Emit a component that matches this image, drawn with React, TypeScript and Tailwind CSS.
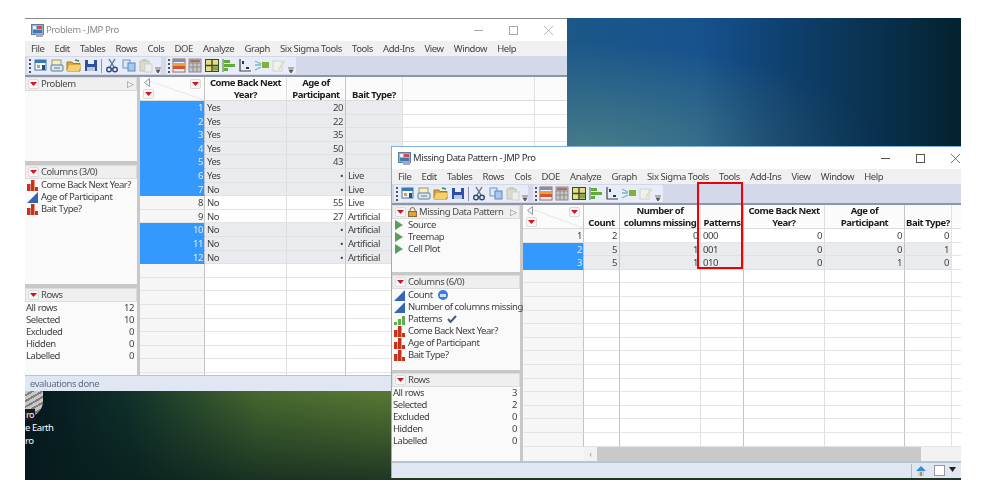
import type { ReactNode } from "react"

type Col = { name?: string[]; w: number; align?: "left" | "right"; line?: string }
type Row = { selected: boolean; cells: string[] }

const menus = ["File", "Edit", "Tables", "Rows", "Cols", "DOE", "Analyze", "Graph", "Six Sigma Tools", "Tools", "Add-Ins", "View", "Window", "Help"]

const problemCols: Col[] = [
  { w: 65, line: "border-[#c4c4c4]" },
  { name: ["Come Back Next", "Year?"], w: 82, align: "left", line: "border-[#dedede]" },
  { name: ["Age of", "Participant"], w: 59, align: "right", line: "border-[#c4c4c4]" },
  { name: ["Bait Type?"], w: 57, align: "left", line: "border-[#e2e2e2]" },
  { w: 132, line: "border-[#e2e2e2]" },
  { w: 32, line: "border-transparent" },
]

const problemRows: Row[] = [
  { selected: true, cells: ["Yes", "20", ""] },
  { selected: true, cells: ["Yes", "22", ""] },
  { selected: true, cells: ["Yes", "35", ""] },
  { selected: true, cells: ["Yes", "50", ""] },
  { selected: true, cells: ["Yes", "43", ""] },
  { selected: true, cells: ["Yes", "•", "Live"] },
  { selected: true, cells: ["No", "•", "Live"] },
  { selected: false, cells: ["No", "55", "Live"] },
  { selected: false, cells: ["No", "27", "Artificial"] },
  { selected: true, cells: ["No", "•", "Artificial"] },
  { selected: true, cells: ["No", "•", "Artificial"] },
  { selected: true, cells: ["No", "•", "Artificial"] },
]

const patternCols: Col[] = [
  { w: 61, line: "border-[#c4c4c4]" },
  { name: ["Count"], w: 36, align: "right", line: "border-[#c4c4c4]" },
  { name: ["Number of", "columns missing"], w: 81, align: "right", line: "border-[#dedede]" },
  { name: ["Patterns"], w: 43, align: "left", line: "border-[#c4c4c4]" },
  { name: ["Come Back Next", "Year?"], w: 81, align: "right", line: "border-[#dedede]" },
  { name: ["Age of", "Participant"], w: 80, align: "right", line: "border-[#c4c4c4]" },
  { name: ["Bait Type?"], w: 47, align: "right", line: "border-[#e2e2e2]" },
  { w: 10, line: "border-transparent" },
]

const patternRows: Row[] = [
  { selected: false, cells: ["2", "0", "000", "0", "0", "0"] },
  { selected: true, cells: ["5", "1", "001", "0", "0", "1"] },
  { selected: true, cells: ["5", "1", "010", "0", "1", "0"] },
]

function Caret() {
  return (
    <span className="flex h-[10px] w-[11px] shrink-0 items-center justify-center rounded-[2px] border border-[#dcdcdc] bg-[#f7f7f7]">
      <svg width="7" height="4" viewBox="0 0 7 4">
        <path d="M0 0h7L3.500 4z" fill="#d8121c" />
      </svg>
    </span>
  )
}

function BarsIcon() {
  return (
    <svg width="11" height="11" viewBox="0 0 11 11" className="shrink-0">
      <path d="M0 4h3.500v7H0zM4 0h3.500v11H4zM8 7h3v4H8z" fill="#c8321a" />
    </svg>
  )
}

function RampIcon() {
  return (
    <svg width="11" height="11" viewBox="0 0 11 11" className="shrink-0">
      <path d="M0 11L11 0v11z" fill="#3566b4" />
    </svg>
  )
}

function StepsIcon() {
  return (
    <svg width="11" height="11" viewBox="0 0 11 11" className="shrink-0">
      <path d="M0 8h3v3H0zM4 5h3v6H4zM8 2h3v9H8z" fill="#5cae4e" />
    </svg>
  )
}

function PlayIcon() {
  return (
    <svg width="9" height="10" viewBox="0 0 9 10" className="shrink-0">
      <path d="M1 0l8 5-8 5z" fill="#58a05a" />
    </svg>
  )
}

function WindowIcon() {
  return (
    <svg width="13" height="13" viewBox="0 0 13 13" className="shrink-0">
      <rect x="0.5" y="0.5" width="12" height="10" fill="#8fb4d8" stroke="#5d7f9f" />
      <rect x="2" y="2" width="3" height="3" fill="#e8f0f8" />
      <rect x="6" y="2" width="5" height="3" fill="#d34f45" />
      <rect x="2" y="6" width="9" height="3" fill="#3d78b8" />
      <rect x="5" y="10" width="7" height="3" fill="#a7a7b8" />
    </svg>
  )
}

function Tool({ children }: { children: ReactNode }) {
  return (
    <svg width="16" height="15" viewBox="0 0 16 15" className="shrink-0">
      {children}
    </svg>
  )
}

function Overflow() {
  return (
    <svg width="6" height="7" viewBox="0 0 6 7" className="shrink-0 self-end">
      <path d="M0 1h6M1 3h4l-2 3z" stroke="#555" strokeWidth="0.8" fill="#555" />
    </svg>
  )
}

function Grip() {
  return <span className="h-[14px] w-[2px] shrink-0 border-l-2 border-dotted border-[#555]" />
}

function Toolbar() {
  return (
    <div className="flex h-[21px] items-center gap-[5px] border-b-2 border-[#8e95a6] bg-[#d3d9ea] pl-[2px]">
      <div className="flex h-[17px] w-[134px] items-center gap-[1px] rounded-[2px] bg-[#e8ecf6] px-[2px]">
        <Grip />
        <Tool>
          <rect x="3" y="2" width="11" height="10" fill="#f6f8fb" stroke="#3a78b5" />
          <path d="M3 2h11v3H3z" fill="#3a78b5" />
          <path d="M5 7h3v3H5z" fill="#e79c2d" />
          <path d="M10 7h3v5h-3z" fill="#274f7d" />
        </Tool>
        <Tool>
          <rect x="3" y="2" width="9" height="7" fill="#f6efc4" stroke="#9a9a70" />
          <rect x="2" y="7" width="12" height="6" rx="1" fill="#dfe7ee" stroke="#557f99" />
          <path d="M5 10h6" stroke="#557f99" />
        </Tool>
        <Tool>
          <path d="M1 4h5l1 1.500h7V13H1z" fill="#d9a63e" stroke="#a87a22" />
          <path d="M3 7h12l-2 6H1z" fill="#f5d070" />
          <path d="M9 2l4 1" stroke="#3f8a3f" strokeWidth="1.500" />
        </Tool>
        <Tool>
          <rect x="2" y="2" width="12" height="11" fill="#2f4fa2" />
          <rect x="5" y="2" width="6" height="4" fill="#e7ecf7" />
          <rect x="4" y="9" width="8" height="4" fill="#b9c4dd" />
        </Tool>
        <span className="mx-[1px] h-[14px] w-px shrink-0 bg-[#8f97a8]" />
        <Tool>
          <path d="M5 1l5 8M11 1L6 9" stroke="#5b7390" strokeWidth="1.400" />
          <circle cx="5" cy="11.500" r="2.300" fill="none" stroke="#2c4a76" strokeWidth="1.400" />
          <circle cx="11" cy="11.500" r="2.300" fill="none" stroke="#2c4a76" strokeWidth="1.400" />
        </Tool>
        <Tool>
          <rect x="2" y="2" width="7" height="8" fill="#dce8f7" stroke="#6d93c6" />
          <rect x="7" y="5" width="7" height="8" fill="#a9c6ec" stroke="#5b86c0" />
        </Tool>
        <Tool>
          <rect x="2" y="3" width="9" height="10" fill="#dddad0" stroke="#c4c0b2" />
          <rect x="7" y="6" width="7" height="8" fill="#eeeeee" stroke="#cfcfcf" />
          <rect x="4" y="1" width="5" height="3" fill="#cfcabb" />
        </Tool>
        <Overflow />
      </div>
      <div className="flex h-[17px] w-[130px] items-center gap-[0.700px] rounded-[2px] bg-[#e8ecf6] px-[2px]">
        <Grip />
        <Tool>
          <rect x="2" y="1" width="12" height="13" fill="#f4f2ee" stroke="#9a6a5a" />
          <rect x="2" y="5" width="12" height="3" fill="#e8a52c" />
          <rect x="2" y="8" width="12" height="3" fill="#d9503f" />
          <rect x="2" y="1" width="12" height="3" fill="#6f93c9" />
        </Tool>
        <Tool>
          <rect x="2" y="1" width="12" height="13" fill="#c9c6c6" stroke="#8f8a8a" />
          <path d="M2 5h12M6 1v13M10 1v13M2 9h12" stroke="#8f8a8a" />
          <rect x="3" y="2" width="10" height="2" fill="#b36c62" />
        </Tool>
        <Tool>
          <rect x="1.500" y="1.500" width="13" height="12" fill="#e4dc86" stroke="#3a4a22" />
          <path d="M1.500 7.500h13M8 1.500v12" stroke="#3a4a22" strokeWidth="1.400" />
          <rect x="9" y="8.500" width="5" height="4" fill="#7ea84a" />
        </Tool>
        <Tool>
          <path d="M2 1v13" stroke="#3e7d3a" />
          <path d="M3 2h6v3H3zM3 6h11v3H3zM3 10h4v3H3z" fill="#63a93c" />
        </Tool>
        <Tool>
          <path d="M3 1v12h11" fill="none" stroke="#444" strokeWidth="1.200" />
          <path d="M5 3h2v3H5zM9 9h3v2H9z" fill="#26364f" />
        </Tool>
        <Tool>
          <path d="M1 3l6 3M1 7h6M1 12l6-3" stroke="#7ab6c9" strokeWidth="1.300" />
          <rect x="8" y="4" width="7" height="6" fill="#7cb436" />
        </Tool>
        <Tool>
          <rect x="2" y="3" width="9" height="10" fill="#f0f0ec" stroke="#d2d2cc" />
          <path d="M7 11l6-9 1.500 1-6 9z" fill="#dcdcc8" />
        </Tool>
        <Overflow />
      </div>
    </div>
  )
}

function PanelHead({ children }: { children: ReactNode }) {
  return (
    <div className="flex h-[14px] shrink-0 items-center gap-[2px] border border-[#dcdcdc] bg-[#efefef] px-[2px] whitespace-nowrap text-[#4a4a4a]">
      {children}
    </div>
  )
}

function ListItem({ icon, label, extra }: { icon: ReactNode; label: string; extra?: ReactNode }) {
  return (
    <div className="flex h-[12px] items-center gap-[3px] pl-[2px] whitespace-nowrap text-[#3f3f3f]">
      {icon}
      <span>{label}</span>
      {extra}
    </div>
  )
}

function RowStats({ values }: { values: number[] }) {
  const labels = ["All rows", "Selected", "Excluded", "Hidden", "Labelled"]
  return (
    <div className="pr-[3px] pl-[1px] text-[#3f3f3f]">
      {labels.map((label, i) => (
        <div key={label} className="flex h-[12px] items-center justify-between">
          <span>{label}</span>
          <span>{values[i]}</span>
        </div>
      ))}
    </div>
  )
}

function DataGrid({ cols, rows, total }: { cols: Col[]; rows: Row[]; total: number }) {
  const empty = Array.from({ length: total - rows.length })
  return (
    <div className="min-w-0 flex-1 overflow-hidden bg-white">
      <div className="flex h-[24px]">
        {cols.map((col, i) => (
          <div
            key={i}
            style={{ width: col.w }}
            className={`relative flex shrink-0 flex-col justify-end border-r border-b ${col.line} border-b-[#dcdcdc] bg-[#fbfbfb] text-center leading-[11.500px] font-bold text-[#1c1c1c]`}
          >
            {i === 0 && (
              <>
                <svg className="absolute inset-0 h-full w-full" viewBox="0 0 60 24" preserveAspectRatio="none">
                  <path d="M8 4L60 24" stroke="#e2e2e2" strokeWidth="0.8" />
                </svg>
                <svg width="6" height="9" viewBox="0 0 6 9" className="absolute top-[1px] left-[4px]">
                  <path d="M5.500 0.500v8L0.500 4.500z" fill="#f4f4f4" stroke="#999" />
                </svg>
                <span className="absolute top-[2px] right-[3px]">
                  <Caret />
                </span>
                <span className="absolute bottom-[1px] left-[3px]">
                  <Caret />
                </span>
              </>
            )}
            {col.name?.map(line => (
              <div key={line} className="whitespace-nowrap">
                {line}
              </div>
            ))}
          </div>
        ))}
      </div>
      {rows.map((row, r) => (
        <div key={r} className="flex h-[13.6px] leading-[13px]">
          <div
            style={{ width: cols[0].w }}
            className={`shrink-0 border-r border-b pr-[1px] text-right ${cols[0].line} ${row.selected ? "border-b-[#3399ff] bg-[#3399ff] text-[#dcecff]" : "border-b-[#e4e4e4] bg-[#f6f6f6] text-[#404040]"}`}
          >
            {r + 1}
          </div>
          {cols.slice(1).map((col, c) => (
            <div
              key={c}
              style={{ width: col.w }}
              className={`shrink-0 border-r border-b px-[2px] text-[#404040] ${col.line} ${col.align === "right" ? "text-right" : "text-left"} ${row.selected && c < row.cells.length ? "border-b-[#dfe1e4] bg-[#e9ebee]" : "border-b-[#e4e4e4] bg-white"}`}
            >
              {row.cells[c]}
            </div>
          ))}
        </div>
      ))}
      {empty.map((_, r) => (
        <div key={r} className="flex h-[13.6px]">
          {cols.map((col, c) => (
            <div
              key={c}
              style={{ width: col.w }}
              className={`shrink-0 border-r border-b border-b-[#e4e4e4] ${col.line} ${c === 0 ? "bg-[#f6f6f6]" : "bg-white"}`}
            />
          ))}
        </div>
      ))}
    </div>
  )
}

function Titlebar({ title, active }: { title: string; active: boolean }) {
  return (
    <div className={`flex h-[22px] items-center bg-white pl-[6px] ${active ? "pr-[1px]" : "pr-[14px]"}`}>
      <WindowIcon />
      <span className={`ml-[2px] text-[9.500px] tracking-[-0.45px] ${active ? "text-[#333]" : "text-[#8a8a8a]"}`}>{title}</span>
      <div className={`ml-auto flex items-center gap-[26px] ${active ? "text-[#555]" : "text-[#a8a8a8]"}`}>
        <span className="h-px w-[9px] bg-current" />
        <span className="h-[9px] w-[9px] border border-current" />
        <svg width="9" height="9" viewBox="0 0 9 9">
          <path d="M0 0l9 9M9 0L0 9" stroke="currentColor" strokeWidth="0.8" />
        </svg>
      </div>
    </div>
  )
}

function Menubar() {
  return (
    <div className="flex h-[15px] items-center gap-[10.200px] bg-[#f0f0f0] pl-[6px] text-[#444]">
      {menus.map(m => (
        <span key={m} className="whitespace-nowrap">
          {m}
        </span>
      ))}
    </div>
  )
}

export default function App() {
  return (
    <div className="relative h-[498px] w-[987px] overflow-hidden bg-white font-['Noto_Sans',sans-serif] text-[9.500px] leading-[12px] tracking-[-0.45px]">
      <div className="absolute top-[18px] left-[25px] h-[462px] w-[936px] overflow-hidden">
        <div className="h-[231px] bg-[linear-gradient(90deg,transparent_72%,#03222f_100%),radial-gradient(ellipse_300px_110px_at_560px_135px,#487d88,transparent),linear-gradient(90deg,#1f5a86_50%,#15508f_78%)]" />
        <div className="h-[231px] bg-[linear-gradient(180deg,transparent_62%,rgba(6,28,28,0.7)_100%),linear-gradient(90deg,#04161e_0%,#10302a_11%,#466830_25%,#577833_38%,#4e7031_100%)]" />

        {/* desktop icon peeking out under the first window */}
        <div className="absolute top-[373px] left-0 h-[26px] w-[18px] rounded-br-[16px] bg-[repeating-linear-gradient(150deg,#c8c8c8_0px,#c8c8c8_3px,#808080_3px,#808080_5px)] blur-[0.4px]" />
        <div className="absolute top-[391px] left-0 bg-[#1c1c1c] px-[1px] text-[9px] text-white">ro</div>
        <div className="absolute top-[404px] left-0 text-white">e Earth</div>
        <div className="absolute top-[417px] left-0 text-white">ro</div>

        {/* Problem window */}
        <div className="absolute top-0 left-0 flex h-[373px] w-[542px] flex-col overflow-hidden border-t border-[#8a8a8a] bg-white blur-[0.4px]">
          <Titlebar title="Problem - JMP Pro" active={false} />
          <Menubar />
          <Toolbar />
          <div className="flex min-h-0 flex-1">
            <div className="flex w-[115px] shrink-0 flex-col gap-[4px] border-r-[3px] border-[#c8c8c8] bg-[#c8c8c8]">
              <div className="h-[84px] bg-[#fafafa]">
                <PanelHead>
                  <Caret />
                  <span>Problem</span>
                  <span className="ml-auto text-[9px] text-[#888]">▷</span>
                </PanelHead>
              </div>
              <div className="h-[119px] bg-[#fafafa]">
                <PanelHead>
                  <Caret />
                  <span>Columns (3/0)</span>
                </PanelHead>
                <ListItem icon={<BarsIcon />} label="Come Back Next Year?" />
                <ListItem icon={<RampIcon />} label="Age of Participant" />
                <ListItem icon={<BarsIcon />} label="Bait Type?" />
              </div>
              <div className="flex-1 bg-[#fafafa]">
                <PanelHead>
                  <Caret />
                  <span>Rows</span>
                </PanelHead>
                <RowStats values={[12, 10, 0, 0, 0]} />
              </div>
            </div>
            <DataGrid cols={problemCols} rows={problemRows} total={21} />
          </div>
          <div className="flex h-[16px] shrink-0 items-center border-t border-[#b9c3d6] bg-[#e1e7f2] pl-[5px] text-[#5f6f86]">
            evaluations done
          </div>
        </div>

        {/* Missing Data Pattern window */}
        <div className="absolute top-[128px] left-[366px] flex h-[332px] w-[570px] flex-col overflow-hidden border-t border-l border-[#7fb2e0] bg-white blur-[0.4px]">
          <Titlebar title="Missing Data Pattern - JMP Pro" active />
          <Menubar />
          <Toolbar />
          <div className="flex min-h-0 flex-1">
            <div className="flex w-[131px] shrink-0 flex-col gap-[3px] border-r-[3px] border-[#c8c8c8] bg-[#c8c8c8]">
              <div className="h-[67px] bg-[#fafafa]">
                <PanelHead>
                  <Caret />
                  <svg width="9" height="10" viewBox="0 0 9 10" className="shrink-0">
                    <path d="M2 5V3a2.500 2.500 0 015 0v2" fill="none" stroke="#8a6a3a" />
                    <rect x="0.500" y="4.500" width="8" height="5" fill="#d9a63e" stroke="#8a6a3a" />
                  </svg>
                  <span>Missing Data Pattern</span>
                  <span className="ml-auto text-[9px] text-[#888]">▷</span>
                </PanelHead>
                <div className="pl-[2px]">
                  {["Source", "Treemap", "Cell Plot"].map(s => (
                    <div key={s} className="flex h-[12px] items-center gap-[5px] text-[#3f3f3f]">
                      <PlayIcon />
                      <span>{s}</span>
                    </div>
                  ))}
                </div>
              </div>
              <div className="h-[95px] bg-[#fafafa]">
                <PanelHead>
                  <Caret />
                  <span>Columns (6/0)</span>
                </PanelHead>
                <ListItem
                  icon={<RampIcon />}
                  label="Count"
                  extra={
                    <span className="ml-[2px] flex h-[10px] w-[10px] items-center justify-center rounded-full bg-[#3b7be0]">
                      <span className="h-[3px] w-[6px] bg-[#cfe0fa]" />
                    </span>
                  }
                />
                <ListItem icon={<RampIcon />} label="Number of columns missing" />
                <ListItem
                  icon={<StepsIcon />}
                  label="Patterns"
                  extra={
                    <svg width="10" height="8" viewBox="0 0 10 8" className="ml-[2px]">
                      <path d="M1 4l2.500 3L9 1" fill="none" stroke="#4a5a80" strokeWidth="2" />
                    </svg>
                  }
                />
                <ListItem icon={<BarsIcon />} label="Come Back Next Year?" />
                <ListItem icon={<BarsIcon />} label="Age of Participant" />
                <ListItem icon={<BarsIcon />} label="Bait Type?" />
              </div>
              <div className="flex-1 bg-[#fafafa]">
                <PanelHead>
                  <Caret />
                  <span>Rows</span>
                </PanelHead>
                <RowStats values={[3, 2, 0, 0, 0]} />
              </div>
            </div>
            <div className="flex min-w-0 flex-1 flex-col">
              <div className="flex min-h-0 flex-1">
                <DataGrid cols={patternCols} rows={patternRows} total={16} />
              </div>
              <div className="flex h-[14px] shrink-0 bg-[#f2f2f2]">
                <span className="w-[61px] shrink-0 bg-[#f6f6f6]" />
                <span className="flex w-[13px] shrink-0 items-center justify-center text-[9px] text-[#999]">‹</span>
                <span className="w-[324px] shrink-0 bg-[#c9c9c9]" />
              </div>
            </div>
          </div>
          <div className="flex h-[17px] shrink-0 items-center justify-end border-t-2 border-[#b9c3d6] bg-[#e1e7f2] pr-[5px]">
            <span className="mr-[4px] h-[14px] w-px bg-[#b0b8c8]" />
            <svg width="10" height="10" viewBox="0 0 10 10" className="mr-[8px]">
              <path d="M5 0l5 5H0z" fill="#2f8fd0" />
              <rect x="2" y="5" width="6" height="5" fill="#b7d5ea" />
              <rect x="4" y="6" width="2" height="4" fill="#d08a2c" />
            </svg>
            <span className="mr-[4px] h-[11px] w-[11px] border border-[#9a9a9a] bg-white" />
            <svg width="7" height="5" viewBox="0 0 7 5" className="mb-[3px]">
              <path d="M0 0h7L3.500 5z" fill="#222" />
            </svg>
          </div>
        </div>

        {/* annotation around the Patterns column */}
        <div className="absolute top-[164px] left-[672px] h-[87px] w-[46px] border-2 border-[#f00000]" />
      </div>
    </div>
  )
}
